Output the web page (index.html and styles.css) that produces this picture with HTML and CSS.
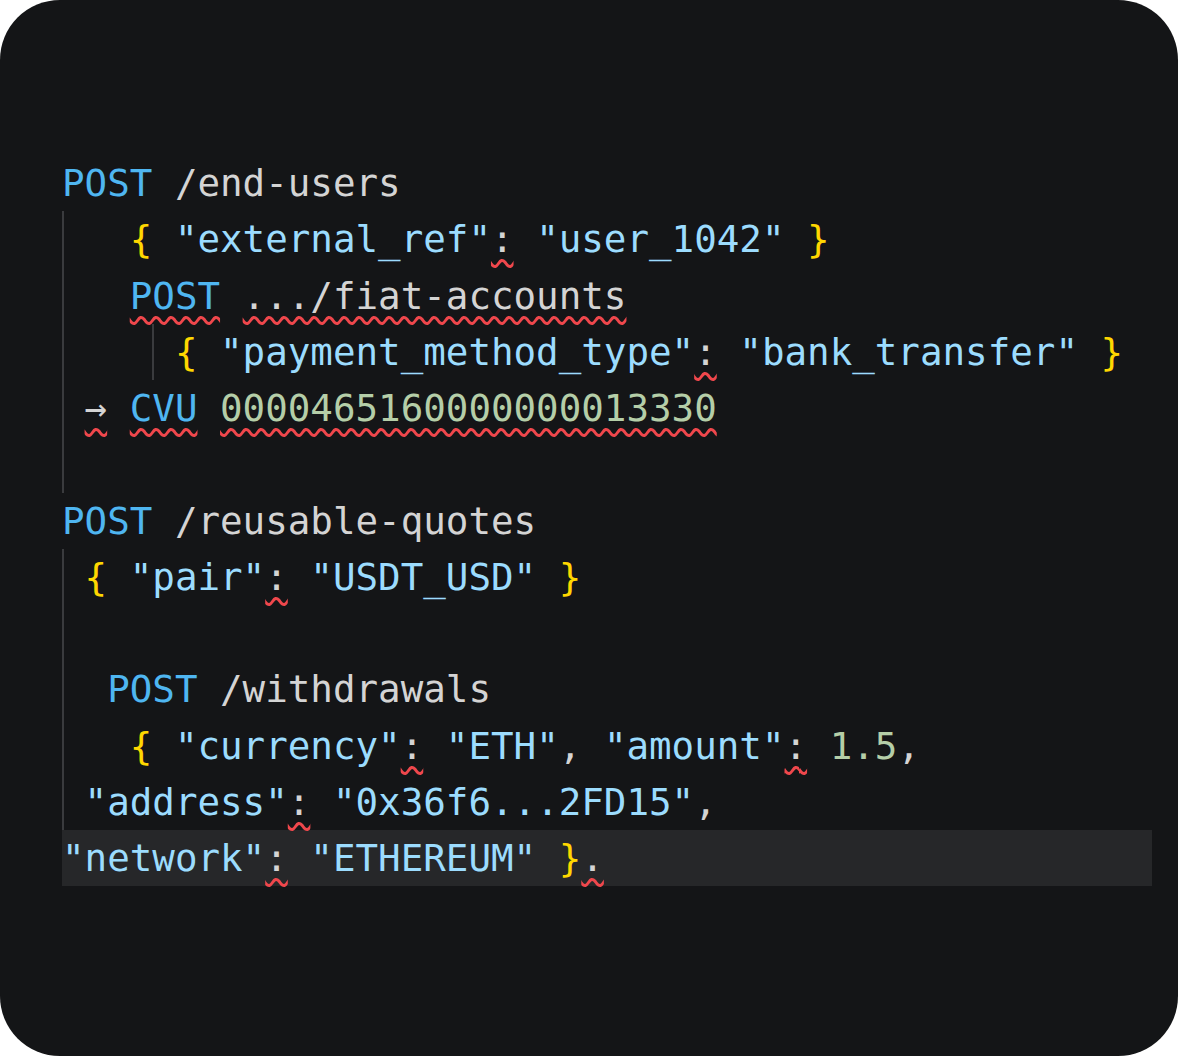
FILE: index.html
```html
<!DOCTYPE html>
<html>
<head>
<meta charset="utf-8">
<link rel="stylesheet" href="styles.css">
</head>
<body>
<div class="card">
  <div class="code">
    <div class="line"><span class="kw">POST</span> <span class="path">/end-users</span></div>
    <div class="group">
      <div class="line">   <span class="br">{</span> <span class="str">"external_ref"</span><span class="err pun">:</span> <span class="str">"user_1042"</span> <span class="br">}</span></div>
      <div class="line">   <span class="kw err">POST</span> <span class="path err">.../fiat-accounts</span></div>
      <div class="line guide4">     <span class="br">{</span> <span class="str">"payment_method_type"</span><span class="err pun">:</span> <span class="str">"bank_transfer"</span> <span class="br">}</span></div>
      <div class="line"> <span class="pun err">→</span> <span class="kw err">CVU</span> <span class="num err">0000465160000000013330</span></div>
      <div class="line"> </div>
    </div>
    <div class="line"><span class="kw">POST</span> <span class="path">/reusable-quotes</span></div>
    <div class="group">
      <div class="line"> <span class="br">{</span> <span class="str">"pair"</span><span class="err pun">:</span> <span class="str">"USDT_USD"</span> <span class="br">}</span></div>
      <div class="line"> </div>
      <div class="line">  <span class="kw">POST</span> <span class="path">/withdrawals</span></div>
      <div class="line">   <span class="br">{</span> <span class="str">"currency"</span><span class="err pun">:</span> <span class="str">"ETH"</span><span class="pun">,</span> <span class="str">"amount"</span><span class="err pun">:</span> <span class="num">1.5</span><span class="pun">,</span></div>
      <div class="line"> <span class="str">"address"</span><span class="err pun">:</span> <span class="str">"0x36f6...2FD15"</span><span class="pun">,</span></div>
    </div>
    <div class="line current"><span class="str">"network"</span><span class="err pun">:</span> <span class="str">"ETHEREUM"</span> <span class="br">}</span><span class="err pun">.</span></div>
  </div>
</div>
</body>
</html>
```

FILE: styles.css
```css
html, body {
  margin: 0;
  padding: 0;
  background: #ffffff;
}

.card {
  width: 1178px;
  height: 1056px;
  box-sizing: border-box;
  background: #141517;
  border-radius: 60px;
  padding: 155px 26px 0 62px;
}

.code {
  font-family: "DejaVu Sans Mono", "Liberation Mono", monospace;
  font-size: 37.5px;
  line-height: 56.25px;
  color: #d4d4d4;
}

.line {
  white-space: pre;
  height: 56.25px;
}

.group {
  background: linear-gradient(#3a3b3e, #3a3b3e) no-repeat 0 0 / 2px 100%;
}

.guide4 {
  background: linear-gradient(#3a3b3e, #3a3b3e) no-repeat 4ch 0 / 2px 100%;
}

.current {
  background: #262729;
}

.kw { color: #4fb6f1; }
.path { color: #d4d4d4; }
.str { color: #9cdcfe; }
.br { color: #ffd700; }
.num { color: #b5cea8; }
.pun { color: #d4d4d4; }

.err {
  text-decoration-line: underline;
  text-decoration-style: wavy;
  text-decoration-color: #f0474c;
  text-decoration-thickness: 2.6px;
  text-underline-offset: 7px;
  text-decoration-skip-ink: none;
}
```
